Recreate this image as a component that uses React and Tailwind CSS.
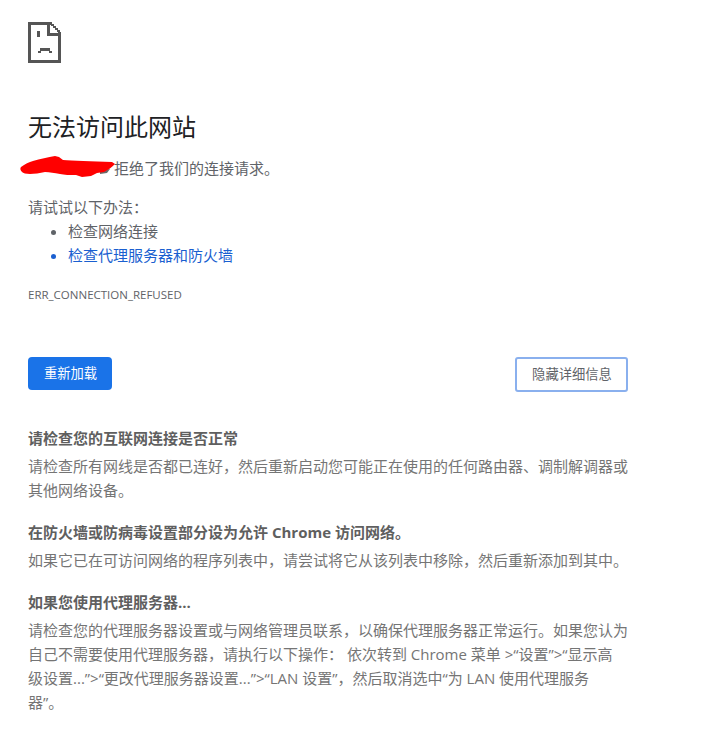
function SadIcon() {
  return (
    <svg width="33" height="41" viewBox="0 0 33 41" className="block" shapeRendering="crispEdges" fill="#555555">
      <path d="M0 0h20v3h-17v35h27v-24h3v27h-33z" />
      <path fillRule="evenodd" d="M19 0h5v2h2v2h2v2h2v2h2v2h1v4h-14z M22 3v8h8v-1h-1v-2h-2v-2h-2v-2h-2v-1z" />
      <rect x="9" y="9" width="3" height="6" />
      <path d="M10 29h2v-3h10v3h2v2h-3v-2h-8v2h-3z" />
    </svg>
  );
}

function Section({ title, children }) {
  return (
    <div className="mb-[18px]">
      <h3 className="text-[15px] leading-[24px] font-bold text-[#5f5f5f]">{title}</h3>
      <p className="text-[15px] leading-[24px] mt-[4px] text-[#757575]">{children}</p>
    </div>
  );
}

export default function App() {
  return (
    <div className="min-h-[739px] bg-white pl-[28px] pt-[22px] font-['Open_Sans','Noto_Sans_CJK_SC',sans-serif] text-[#5f6368]">
      <div className="w-[600px]">
        <SadIcon />

        <h1 className="mt-[44px] text-[24px] leading-[40px] font-normal text-[#202124]">无法访问此网站</h1>

        <div className="relative mt-[9px] text-[15px] leading-[24px]">
          <p className="pl-[86px]">拒绝了我们的连接请求。</p>
          {/* redaction scribble over the host name */}
          <svg className="absolute left-[-8px] top-[-4px]" width="100" height="26" viewBox="0 0 100 26">
            <path d="M80 18 L90 17 L87 21 L80 22 Z" fill="#6b6b6b" />
            <path
              fill="#ff0000"
              d="M1 15 C5 12 9 10 13 9 C20 7 28 5 35 4 L39 5 L43 8 C52 9 72 9 92 10 L95 12 C92 15 88 18 84 20 L77 21 L71 24 L62 25 L56 23 C50 23 44 23 40 22 C34 21 30 20 25 20 C20 21 14 22 10 22 C6 22 3 21 2 20 C0 18 0 16 1 15 Z"
            />
          </svg>
        </div>

        <p className="mt-[15px] text-[15px] leading-[24px]">请试试以下办法：</p>
        <ul className="list-disc pl-[40px] text-[15px] leading-[24px]">
          <li>检查网络连接</li>
          <li className="text-[#1a5fd0]">
            <span>检查代理服务器和防火墙</span>
          </li>
        </ul>

        <div className="mt-[20px] text-[11.5px] leading-[16px]">ERR_CONNECTION_REFUSED</div>

        <div className="mt-[54px] flex items-start justify-between">
          <button className="h-[33px] w-[84px] rounded-[4px] bg-[#1a73e8] pl-[1px] text-[13.3px] text-white">重新加载</button>
          <button className="h-[35px] w-[113px] rounded-[3px] border-2 border-[#8ab0ee] bg-white pl-[1px] text-[13.3px] text-[#5f6368]">隐藏详细信息</button>
        </div>

        <div className="mt-[34px]">
          <Section title="请检查您的互联网连接是否正常">
            请检查所有网线是否都已连好，然后重新启动您可能正在使用的任何路由器、调制解调器或其他网络设备。
          </Section>
          <Section title="在防火墙或防病毒设置部分设为允许 Chrome 访问网络。">
            如果它已在可访问网络的程序列表中，请尝试将它从该列表中移除，然后重新添加到其中。
          </Section>
          <Section title="如果您使用代理服务器...">
            请检查您的代理服务器设置或与网络管理员联系，以确保代理服务器正常运行。如果您认为自己不需要使用代理服务器，请执行以下操作： 依次转到 Chrome 菜单 &gt;“设置”&gt;“显示高<br />级设置...”&gt;“更改代理服务器设置...”&gt;“LAN 设置”，然后取消选中“为 LAN 使用代理服务<br />器”。
          </Section>
        </div>
      </div>
    </div>
  );
}
